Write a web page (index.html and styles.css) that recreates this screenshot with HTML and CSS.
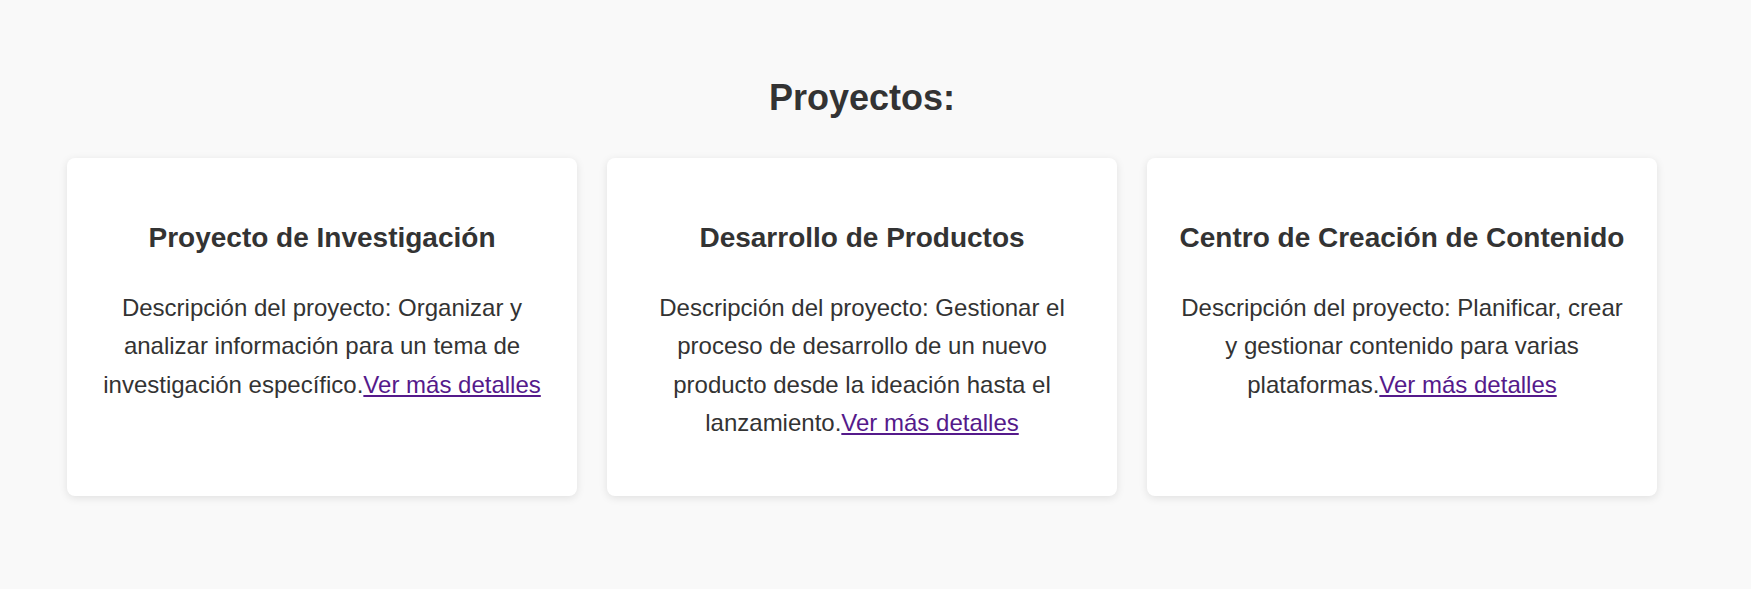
FILE: index.html
```html
<!DOCTYPE html>
<html lang="es">
<head>
<meta charset="utf-8">
<title>Proyectos</title>
<link rel="stylesheet" href="styles.css">
</head>
<body>
<section class="projects">
  <h2 class="projects-title">Proyectos:</h2>
  <div class="project-grid">
    <div class="card">
      <h3 class="card-title">Proyecto de Investigación</h3>
      <p class="card-text">Descripción del proyecto: Organizar y analizar información para un tema de investigación específico.<a class="card-link" href="#">Ver más detalles</a></p>
    </div>
    <div class="card">
      <h3 class="card-title">Desarrollo de Productos</h3>
      <p class="card-text">Descripción del proyecto: Gestionar el proceso de desarrollo de un nuevo producto desde la ideación hasta el lanzamiento.<a class="card-link" href="#">Ver más detalles</a></p>
    </div>
    <div class="card">
      <h3 class="card-title">Centro de Creación de Contenido</h3>
      <p class="card-text">Descripción del proyecto: Planificar, crear y gestionar contenido para varias plataformas.<a class="card-link" href="#">Ver más detalles</a></p>
    </div>
  </div>
</section>
</body>
</html>
```
FILE: styles.css
```css
html, body {
  margin: 0;
  padding: 0;
}

body {
  background: #f9f9f9;
  color: #333333;
  font-family: "Liberation Sans", Arial, sans-serif;
  font-size: 24px;
  line-height: 1.6;
}

.projects {
  padding: 77px 94px 40px 67px;
}

.projects-title {
  margin: 0 0 39px;
  font-size: 36px;
  font-weight: bold;
  line-height: normal;
  text-align: center;
}

.project-grid {
  display: grid;
  grid-template-columns: repeat(3, 510px);
  gap: 30px;
}

.card {
  background: #ffffff;
  border-radius: 8px;
  box-shadow: 0 2px 8px rgba(0, 0, 0, 0.1);
  padding: 30px;
  text-align: center;
}

.card-title {
  margin: 34px 0 35px;
  font-size: 28px;
  font-weight: bold;
  line-height: normal;
}

.card-text {
  margin: 0 0 23px;
  font-size: 24px;
  line-height: 1.6;
}

.card-link {
  color: #551a8b;
  text-decoration: underline;
}
```
